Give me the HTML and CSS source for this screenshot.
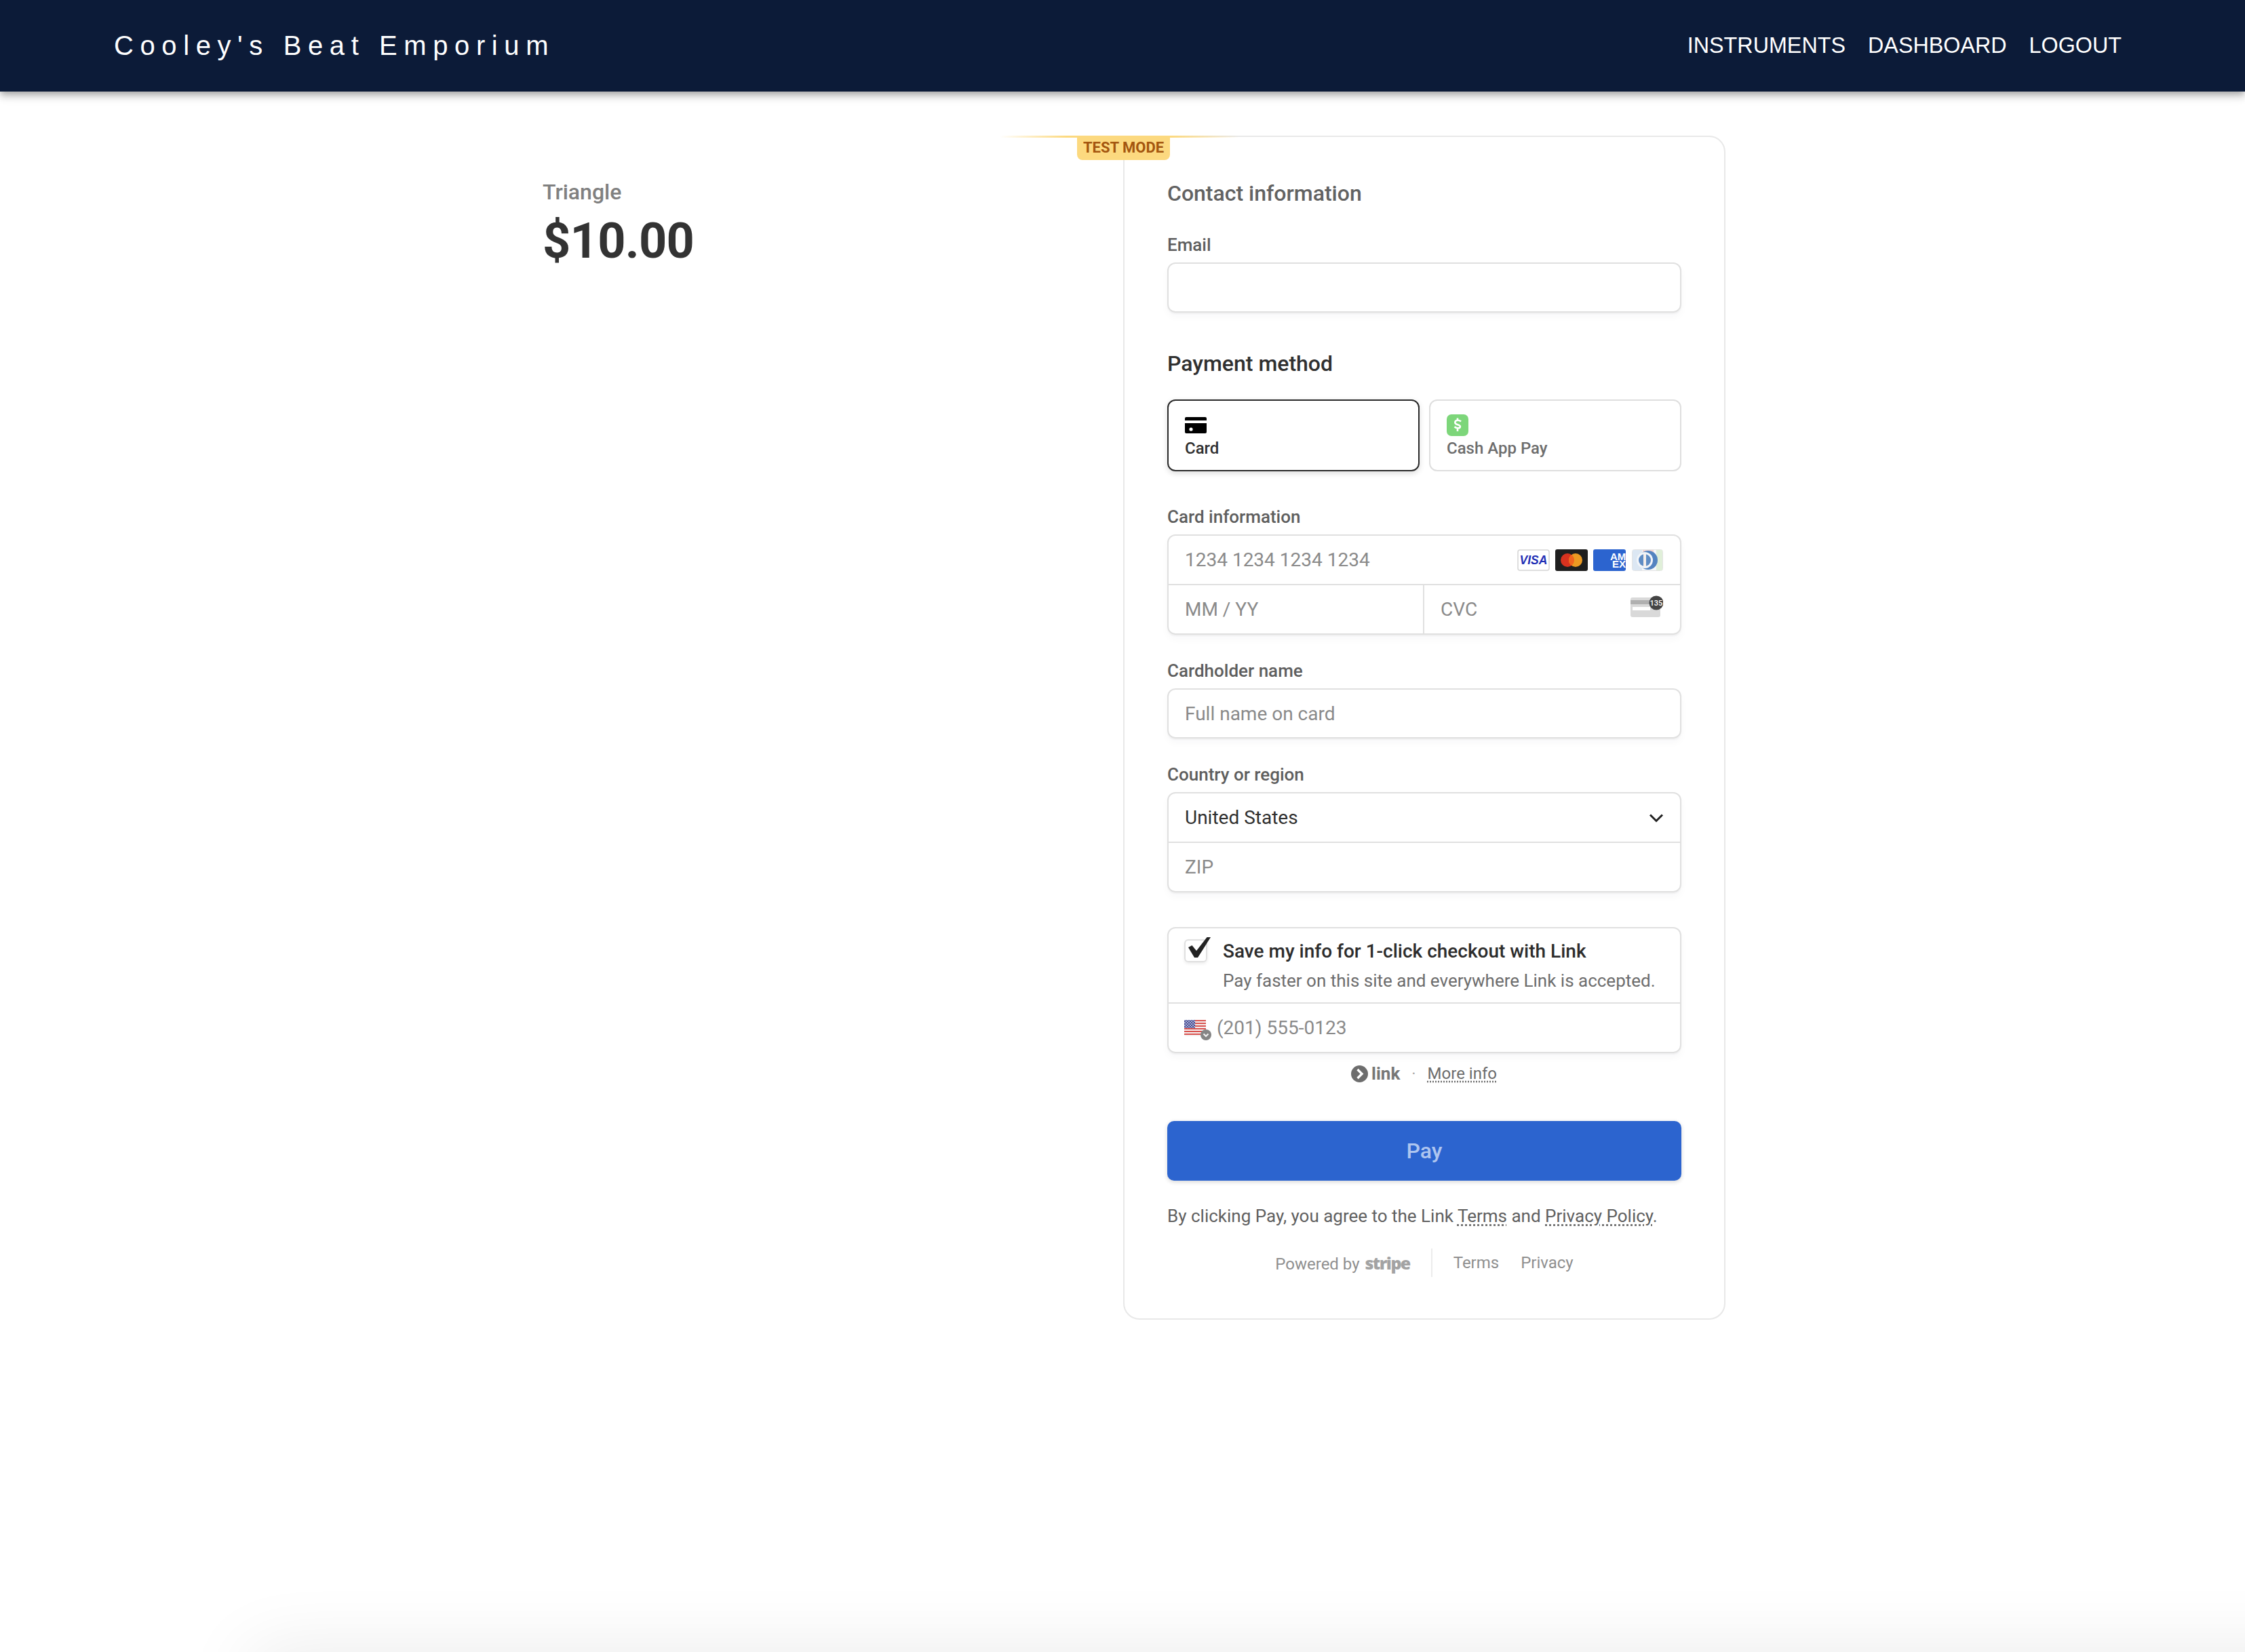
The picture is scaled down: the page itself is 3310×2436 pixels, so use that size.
FILE: index.html
```html
<!DOCTYPE html>
<html>
<head>
<title>Cooley's Beat Emporium - Checkout</title>
<meta name="viewport" content="width=device-width, initial-scale=1">
<link rel="stylesheet" href="styles.css">
</head>
<body>

<header class="topbar">
	<div class="brand">Cooley's Beat Emporium</div>
	<nav class="topnav">
		<a href="#">INSTRUMENTS</a>
		<a href="#">DASHBOARD</a>
		<a href="#">LOGOUT</a>
	</nav>
</header>

<main class="checkout">
	<section class="summary">
		<div class="product">Triangle</div>
		<div class="price">$10.00</div>
	</section>

	<section class="panel">
		<!-- yellow fade along the top edge, then the tab -->
		<div class="test-line"></div>
		<div class="test-badge">TEST MODE</div>

		<h2 class="contact-title">Contact information</h2>
		<div class="label label-email">Email</div>
		<div class="field"></div>

		<h2 class="method-title">Payment method</h2>
		<div class="tabs">
			<div class="tab tab-active">
				<svg class="tab-icon" width="32" height="24" viewBox="0 0 32 24">
					<path d="M2 0h28a2 2 0 0 1 2 2v3H0V2a2 2 0 0 1 2-2z" fill="#000"/>
					<path d="M0 9h32v13a2 2 0 0 1-2 2H2a2 2 0 0 1-2-2z" fill="#000"/>
					<circle cx="9" cy="18" r="2.6" fill="#fff"/>
				</svg>
				<span>Card</span>
			</div>
			<div class="tab">
				<svg class="tab-icon tab-icon-cash" width="32" height="32" viewBox="0 0 32 32">
					<rect width="32" height="32" rx="7" fill="#7dd67a"/>
					<path d="M21 10.5c-1.3-1.2-2.9-1.8-4.7-1.8-2.4 0-4 1.2-4 3.2 0 4 7.6 2.5 7.6 6 0 1.5-1.3 2.4-3.4 2.4-1.9 0-3.6-.7-5-2" fill="none" stroke="#fff" stroke-width="2.6"/>
					<path d="M16 5.5v3.5M16 21v4" stroke="#fff" stroke-width="2.6"/>
				</svg>
				<span>Cash App Pay</span>
			</div>
		</div>

		<div class="label label-card">Card information</div>
		<div class="group">
			<div class="row">
				<span class="hint">1234 1234 1234 1234</span>
				<div class="brands">
					<svg width="48" height="32" viewBox="0 0 48 32">
						<rect x="1" y="1" width="46" height="30" rx="3" fill="#fff" stroke="#d5d5d5" stroke-width="1.5"/>
						<text class="visa-text" x="24" y="22" text-anchor="middle">VISA</text>
					</svg>
					<svg width="48" height="32" viewBox="0 0 48 32">
						<rect width="48" height="32" rx="3" fill="#1f1f1f"/>
						<circle cx="18" cy="16" r="10" fill="#d8321f"/>
						<circle cx="30" cy="16" r="10" fill="#ec9a22"/>
						<path d="M24 8a10 10 0 0 1 0 16a10 10 0 0 1 0-16z" fill="#f0641e"/>
					</svg>
					<svg width="48" height="32" viewBox="0 0 48 32">
						<rect width="48" height="32" rx="3" fill="#2c64cf"/>
						<text class="amex-text" x="25" y="16">AM</text>
						<text class="amex-text" x="28" y="27">EX</text>
					</svg>
					<svg class="brand-faded" width="46" height="32" viewBox="0 0 46 32">
						<rect x=".5" y=".5" width="45" height="31" rx="3" fill="#f6f8fa" stroke="#e4e4e4"/>
						<rect x="1" y="1" width="14" height="30" fill="#dce7f3"/>
						<rect x="16" y="1" width="16" height="8" fill="#f3d3d0"/>
						<rect x="36" y="1" width="9" height="30" fill="#e0efd9"/>
						<circle cx="24" cy="16" r="14" fill="#5484c0"/>
						<circle cx="19" cy="16" r="12" fill="#f2f5f9"/>
						<circle cx="19" cy="16" r="9" fill="#5f8cc4"/>
						<rect x="17" y="7" width="4" height="18" fill="#f5eeea"/>
					</svg>
				</div>
			</div>
			<div class="row-split">
				<div class="row cell-left"><span class="hint">MM / YY</span></div>
				<div class="row cell-right">
					<span class="hint">CVC</span>
					<svg class="cvc-icon" width="48" height="32" viewBox="0 0 48 32">
						<rect y="3" width="44" height="29" rx="3" fill="#d9d9d9"/>
						<rect y="7" width="44" height="6" fill="#b0b0b0"/>
						<rect x="3" y="17" width="26" height="5" fill="#fff"/>
						<circle cx="38" cy="11" r="10.5" fill="#444"/>
						<text class="cvc-text" x="38" y="15" text-anchor="middle">135</text>
					</svg>
				</div>
			</div>
		</div>

		<div class="label label-next">Cardholder name</div>
		<div class="field"><span class="hint">Full name on card</span></div>

		<div class="label label-next">Country or region</div>
		<div class="group">
			<div class="row">
				<span class="value">United States</span>
				<svg class="chevron" width="22" height="14" viewBox="0 0 22 14">
					<path d="M2 2.5l9 9 9-9" fill="none" stroke="#222" stroke-width="3"/>
				</svg>
			</div>
			<div class="row"><span class="hint">ZIP</span></div>
		</div>

		<div class="link-box">
			<div class="link-save">
				<div class="checkbox">
					<svg class="tick" width="40" height="36" viewBox="0 0 40 36">
						<path d="M5 17l5.5-3L17 22 32.5 2H38L19 32h-5z" fill="#222"/>
					</svg>
				</div>
				<div>
					<div class="save-title">Save my info for 1-click checkout with Link</div>
					<div class="save-text">Pay faster on this site and everywhere Link is accepted.</div>
				</div>
			</div>
			<div class="link-phone">
				<svg class="flag" width="42" height="36" viewBox="0 0 42 36">
					<defs>
						<pattern id="stars" width="4" height="4" patternUnits="userSpaceOnUse">
							<rect width="4" height="4" fill="#454c94"/>
							<rect width="2" height="2" fill="#a9add0"/>
							<rect x="2" y="2" width="2" height="2" fill="#a9add0"/>
						</pattern>
					</defs>
					<rect y="1" width="32" height="24" rx="2" fill="#f4f0f0"/>
					<rect y="1" width="32" height="2" fill="#d9534f"/>
					<rect y="5" width="32" height="2" fill="#d9534f"/>
					<rect y="9" width="32" height="2" fill="#d9534f"/>
					<rect y="13" width="32" height="2" fill="#d9534f"/>
					<rect y="17" width="32" height="2" fill="#d9534f"/>
					<rect y="21" width="32" height="2" fill="#d9534f"/>
					<rect y="1" width="16" height="12" fill="url(#stars)"/>
					<circle cx="32" cy="23" r="8" fill="#858585"/>
					<path d="M28.5 21.5l3.5 3.5 3.5-3.5" fill="none" stroke="#f0f0f0" stroke-width="2.2"/>
				</svg>
				<span class="hint">(201) 555-0123</span>
			</div>
		</div>

		<div class="link-row">
			<svg width="25" height="25" viewBox="0 0 25 25">
				<circle cx="12.5" cy="12.5" r="12.5" fill="#6d6d6d"/>
				<path d="M9.5 6l6.5 6.5-6.5 6.5" fill="none" stroke="#fff" stroke-width="3.4"/>
			</svg>
			<span class="link-word">link</span>
			<span class="link-dot">·</span>
			<a class="dotted" href="#">More info</a>
		</div>

		<button class="pay">Pay</button>

		<p class="agree">By clicking Pay, you agree to the Link <a class="dotted" href="#">Terms</a> and <a class="dotted" href="#">Privacy Policy</a>.</p>

		<div class="legal">
			<span class="powered">Powered by <b>stripe</b></span>
			<span class="legal-links">
				<a href="#">Terms</a>
				<a href="#">Privacy</a>
			</span>
		</div>
	</section>
</main>

<div class="page-edge"></div>

</body>
</html>
```

FILE: styles.css
```css
html {
	font: 100% "Roboto", sans-serif;
}
body {
	margin: 0;
	height: 2436px;
	overflow: hidden;
	position: relative;
	background-color: white;
	color: #30313d;
}
a {
	color: inherit;
	text-decoration: none;
}
h2, p {
	margin: 0;
}


.topbar {
	height: 135px;
	padding: 0 182px 0 168px;
	display: flex;
	align-items: center;
	justify-content: space-between;
	background-color: #0c1b38;
	color: white;
	font-family: "Liberation Sans", sans-serif;
	box-shadow: 0 4px 8px -2px rgba(0,0,0,0.2), 0 8px 10px rgba(0,0,0,0.14), 0 2px 20px rgba(0,0,0,0.12);
}
.brand {
	font-size: 40px;
	letter-spacing: 9.6px;
}
.topnav {
	display: flex;
	gap: 33px;
	font-size: 32.3px;
}


.checkout {
	padding: 65px 0 0 800px;
	display: flex;
}
.summary {
	width: 856px;
	padding-top: 61px;
}
.product {
	font-size: 32px;
	line-height: 44px;
	font-weight: 500;
	color: #808080;
}
.price {
	margin-top: 7px;
	font-size: 72px;
	line-height: 88px;
	font-weight: 700;
	letter-spacing: -0.7px;
	color: #333;
}


.panel {
	position: relative;
	box-sizing: border-box;
	width: 888px;
	padding: 63px 63px 61px;
	border: solid 2px #e8e8e8;
	border-radius: 24px;
}
.test-line {
	position: absolute;
	top: -2px;
	left: -184px;
	width: 352px;
	height: 3px;
	background: linear-gradient(90deg, rgba(252,217,127,0), #fcd97f 28%, #fcd97f 72%, rgba(252,217,127,0));
}
.test-badge {
	position: absolute;
	top: -2px;
	left: -70px;
	width: 137px;
	height: 36px;
	line-height: 36px;
	text-align: center;
	font-size: 22px;
	font-weight: 700;
	color: #a4560f;
	background-color: #fcd97f;
	border-radius: 0 0 8px 8px;
}

.contact-title {
	font-size: 32px;
	line-height: 40px;
	font-weight: 500;
	color: #626262;
}
.method-title {
	margin: 54px 0 32px;
	font-size: 32px;
	line-height: 42px;
	font-weight: 500;
	color: #303030;
}
.label {
	margin-bottom: 10px;
	font-size: 26px;
	line-height: 32px;
	font-weight: 500;
	color: #5e5e5e;
}
.label-email {
	margin-top: 40px;
}
.label-card {
	margin-top: 51px;
}
.label-next {
	margin-top: 37px;
}

.field, .group, .link-box {
	box-sizing: border-box;
	border: solid 2px #e0e0e0;
	border-radius: 12px;
	box-shadow: 0 2px 2px rgba(0,0,0,0.04), 0 6px 12px rgba(18,42,66,0.03);
}
.field {
	height: 74px;
	padding: 0 24px;
	display: flex;
	align-items: center;
}
.hint {
	font-size: 28px;
	color: #8a8a8a;
}
.value {
	font-size: 28px;
	color: #303030;
}

.tabs {
	display: flex;
	gap: 14px;
}
.tab {
	box-sizing: border-box;
	flex: 1;
	height: 106px;
	padding: 0 24px;
	display: flex;
	flex-direction: column;
	border: solid 2px #dedede;
	border-radius: 12px;
	font-size: 24px;
	line-height: 32px;
	font-weight: 500;
	color: #6d6d6d;
}
.tab-active {
	border-color: #2a2a2a;
	color: #303030;
	box-shadow: 0 3px 8px rgba(0,0,0,0.14);
}
.tab-icon {
	margin-top: 24px;
	margin-bottom: 6px;
}
.tab-icon-cash {
	margin-top: 20px;
	margin-bottom: 2px;
}

.row {
	box-sizing: border-box;
	height: 71px;
	padding: 0 24px;
	display: flex;
	align-items: center;
	justify-content: space-between;
}
.group > .row + .row {
	height: 73px;
	border-top: solid 2px #e0e0e0;
}
.row-split {
	display: flex;
	border-top: solid 2px #e0e0e0;
}
.cell-left {
	width: 377px;
	border-right: solid 2px #e0e0e0;
}
.cell-right {
	flex: 1;
	padding-right: 24px;
}
.brands {
	display: flex;
	gap: 8px;
	margin-right: 1px;
}
.brand-faded {
	margin-left: 1px;
}
.cvc-icon {
	margin: -10px 1px 0 0;
}
.visa-text {
	font: italic 700 17.5px "Liberation Sans", sans-serif;
	fill: #1f2fb5;
}
.amex-text {
	font: 700 15px "Liberation Sans", sans-serif;
	fill: #fff;
}
.cvc-text {
	font: 500 11px "Roboto", sans-serif;
	fill: #fff;
}

.link-box {
	margin-top: 51px;
}
.link-save {
	box-sizing: border-box;
	height: 111px;
	padding: 16px 0 0 23px;
	display: flex;
	gap: 23px;
	border-bottom: solid 2px #e0e0e0;
}
.checkbox {
	box-sizing: border-box;
	flex: none;
	width: 34px;
	height: 34px;
	border: solid 2px #e0e0e0;
	border-radius: 6px;
	box-shadow: 0 2px 4px rgba(0,0,0,0.08);
}
.tick {
	display: block;
	margin: -7px 0 0 -1px;
	overflow: visible;
}
.save-title {
	font-size: 28px;
	line-height: 36px;
	font-weight: 500;
	color: #2d2d2d;
}
.save-text {
	margin-top: 8px;
	font-size: 26px;
	line-height: 34px;
	color: #6d6d6d;
}
.link-phone {
	height: 71px;
	padding-left: 23px;
	display: flex;
	align-items: center;
	gap: 6px;
}
.flag {
	margin-top: 10px;
}

.link-row {
	margin-top: 15px;
	height: 30px;
	display: flex;
	align-items: center;
	justify-content: center;
	font-size: 24px;
	color: #6d6d6d;
}
.link-row svg {
	margin-left: -1px;
}
.link-word {
	margin-left: 5px;
	font-size: 26px;
	font-weight: 700;
	color: #777;
}
.link-dot {
	margin: 0 17px;
	color: #aaa;
}
.dotted {
	text-decoration: underline dotted;
	text-underline-offset: 3px;
}

.pay {
	display: block;
	width: 100%;
	height: 88px;
	margin-top: 55px;
	padding: 0;
	border: none;
	border-radius: 10px;
	background-color: #2c64cf;
	color: #aec5ef;
	font: 500 32px "Roboto", sans-serif;
	box-shadow: 0 2px 6px rgba(0,0,0,0.16);
}
.agree {
	margin-top: 34px;
	font-size: 26px;
	line-height: 36px;
	color: #606060;
}
.legal {
	margin-top: 30px;
	height: 42px;
	display: flex;
	align-items: center;
	justify-content: center;
	font-size: 24px;
	color: #8f8f8f;
}
.powered {
	padding-right: 31px;
}
.powered b {
	margin-left: 2px;
	font-family: "Open Sans", sans-serif;
	font-size: 25px;
	font-weight: 800;
	letter-spacing: -1.6px;
	color: #a3a3a3;
}
.legal-links {
	height: 42px;
	padding-left: 31px;
	display: flex;
	align-items: center;
	gap: 32px;
	border-left: solid 2px #ececec;
}

/* soft shadow coming up from below the fold, pushed right so it stays full strength at the edge */
.page-edge {
	position: absolute;
	top: 2436px;
	left: 170px;
	right: 0;
	height: 100px;
	box-shadow: 200px 0 110px rgba(0,0,0,0.09);
}
```
